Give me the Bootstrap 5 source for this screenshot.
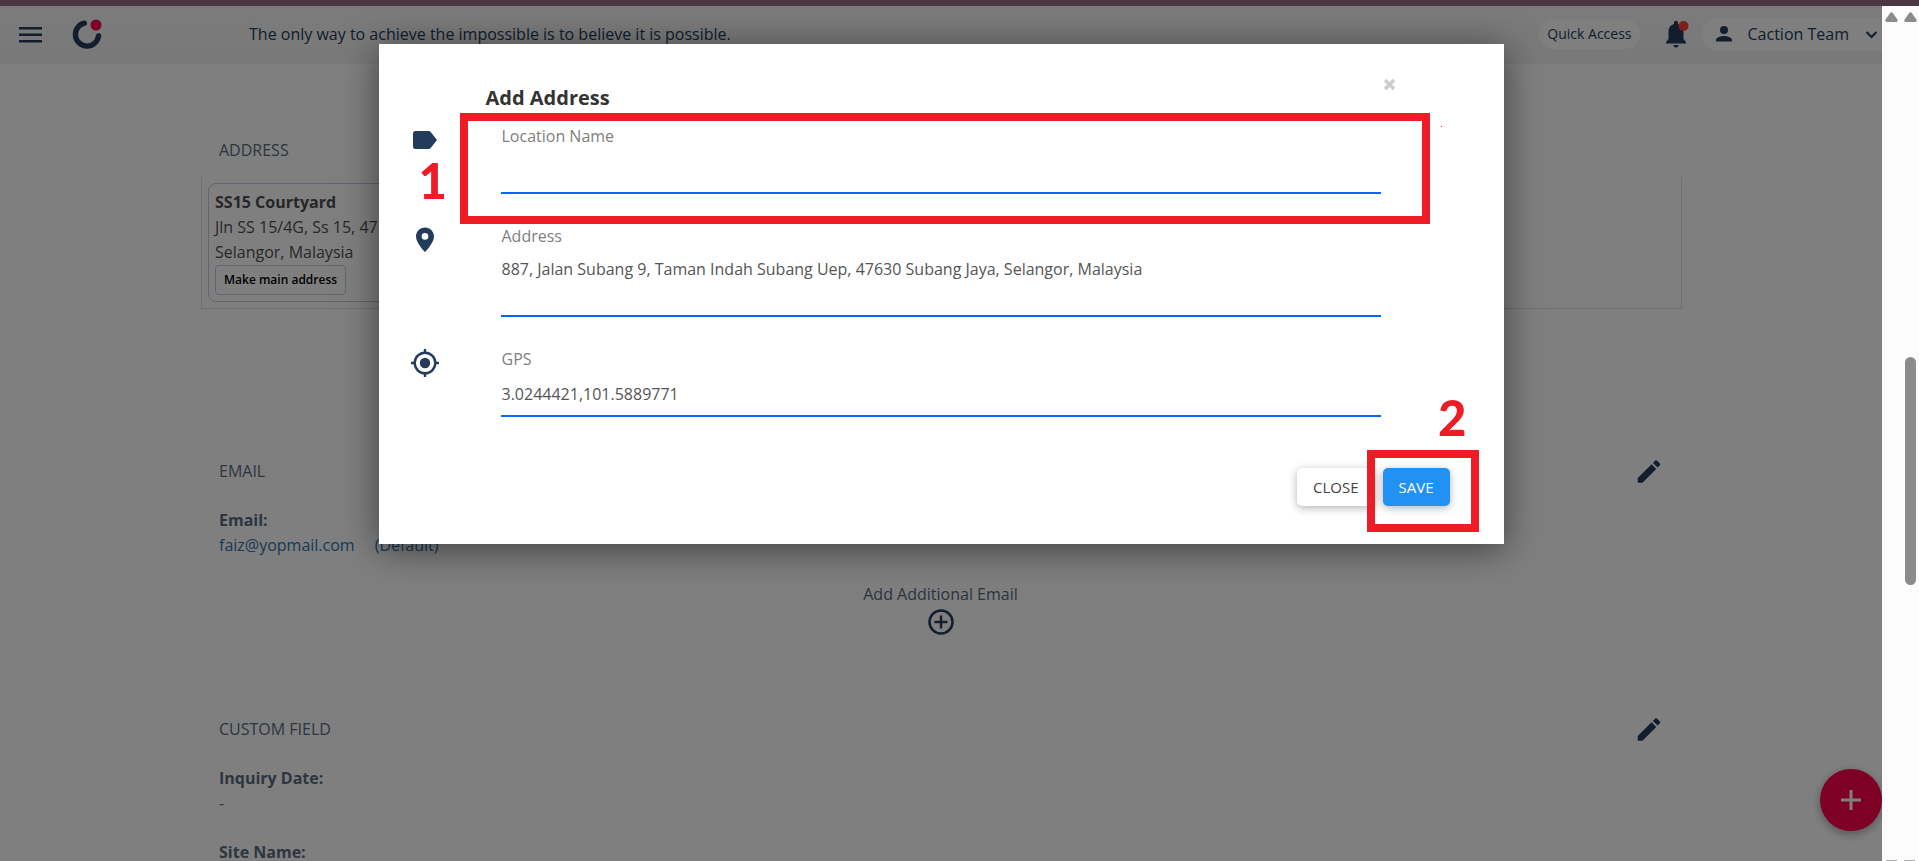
<!DOCTYPE html>
<html lang="en">
<head>
<meta charset="utf-8">
<title>Caction - Add Address</title>
<meta name="viewport" content="width=device-width, initial-scale=1">
<link href="https://cdn.jsdelivr.net/npm/bootstrap@5.3.0/dist/css/bootstrap.min.css" rel="stylesheet">
<style>
  :root { --navy: #243c5c; --slate: #5a6c80; --marker: #ee1c25; }
  body { font-family: "Open Sans", "Noto Sans", sans-serif; font-size: 16px; line-height: 25px; color: var(--slate); background: #fcfcfc; }
  .top-strip { height: 6px; background: #4d3542; }
  .icon-btn { border: 0; padding: 0; background: none; color: var(--navy); display: inline-flex; }
  svg { display: block; fill: currentColor; }

  .app-header { height: 58px; background: linear-gradient(#f7f7f7, #f2f2f2); color: var(--navy); padding: 0 0 2px 16px; }
  .app-logo { margin-left: 27px; }
  .motto { margin-left: 147px; }
  .pill { background: #fefefe; border: 0; color: var(--navy); }
  .quick-pill { height: 30px; border-radius: 15px; font-size: 14px; padding: 0 8px; line-height: 24px; }
  .account-pill { height: 34px; border-radius: 17px 0 0 17px; padding: 0 4px 0 10px; margin-left: 12px; }

  .page-body { padding: 74px 200px 0 201px; }
  .section-title { font-size: 16px; line-height: 25px; font-weight: 400; text-transform: uppercase; margin: 0; }
  .section-inner { padding-left: 18px; padding-right: 20px; }
  .address-list { border: 1px solid #dedede; border-top: 0; padding: 6px; margin-top: 14px; }
  .address-item { border: 1px solid #c3cbdd; border-radius: 8px; padding: 6px; width: 360px; color: #4f4f4f; white-space: nowrap; overflow: hidden; }
  .main-address-btn { display: block; height: 30px; padding: 0 8px; border: 1px solid #c3cbdd; border-radius: 4px; background: #fff; color: #000; font-size: 12px; font-weight: 600; line-height: 26px; }
  .email-section { margin-top: 150px; }
  .custom-section { margin-top: 75px; }
  .mail-link { color: #2f74ac; text-decoration: none; }
  .default-tag { margin-left: 20px; }
  .bold-label { font-weight: 700; }

  .fab { position: absolute; right: 0; bottom: 30px; width: 62px; height: 62px; border: 0; border-radius: 50%; background: #ff004b; color: #fff; box-shadow: 0 3px 10px rgba(0,0,0,.35); }
  .dim { position: absolute; inset: 0; background: rgba(0,0,0,.5); padding-top: 38px; }
  .address-dialog { position: relative; width: 60%; max-width: 1125px; margin: 0 auto; background: #fff; padding: 41px 54px 38px 46px; box-shadow: 0 5px 34px rgba(0,0,0,.5); }
  .dialog-title { font-size: 20px; line-height: 25px; font-weight: 700; color: #333; margin: 0 0 14px 61px; }
  .dismiss { position: absolute; right: 104px; top: 30px; border: 0; padding: 4px; background: none; color: #ccc; }
  .field-row { display: grid; grid-template-columns: 76px 1fr; margin-bottom: 30px; padding-right: 69px; }
  .field-icon { color: var(--navy); margin-left: -14px; margin-top: 1px; }
  .field-row label { display: block; color: #808080; padding-left: 1px; }
  .line-input { display: block; width: 100%; height: 45px; border: 0; border-bottom: 2px solid #0a66ff; padding: 0 1px; background: none; color: #555; resize: none; outline: 0; overflow: hidden; line-height: 25px; }
  textarea.line-input { height: 68px; padding-top: 8px; }
  .dialog-actions { margin-top: 51px; }
  .dialog-btn { height: 38px; border: 0; border-radius: 5px; font-size: 15px; padding: 0 16px; box-shadow: 0 2px 8px rgba(0,0,0,.3); }
  .close-btn { background: #fff; color: #444; }
  .save-btn { background: #2191f3; color: #fff; }

  .marker-box { position: absolute; border: 8px solid var(--marker); pointer-events: none; }
  .marker-name { left: 81px; right: 74px; top: 69px; height: 111px; }
  .marker-save { right: 25px; bottom: 12px; width: 112px; height: 82px; }
  .marker-num { position: absolute; font: 900 49px/50px Lato, sans-serif; color: var(--marker); }
  .num-one { left: 40px; top: 111px; }
  .num-two { right: 37px; top: 348px; }
  .marker-dot { position: absolute; width: 1px; height: 1px; background: var(--marker); right: 62px; top: 82px; }

  .scroll-gutter { width: 37px; background: #fcfcfc; position: relative; color: #8b8b8b; padding: 6px 2px 0 3px; }
  .scroll-thumb { position: absolute; right: 3px; top: 41%; width: 11px; height: 228px; border-radius: 6px; background: #8b8b8b; }
  .scroll-end { position: absolute; bottom: 0; left: 4px; right: 4px; }
  .scroll-end span { width: 11px; height: 1px; background: #aaa; }
</style>
</head>
<body class="vh-100 overflow-hidden d-flex flex-column">
<div class="top-strip flex-shrink-0"></div>
<div class="d-flex flex-grow-1 overflow-hidden">
  <div class="flex-grow-1 position-relative overflow-hidden bg-white">
    <header class="app-header d-flex align-items-center">
      <button class="icon-btn" aria-label="Menu"><svg width="29" height="24" viewBox="0 0 29 24"><path d="M3 5h23v2.500H3zM3 11.500h23V14H3zM3 18h23v2.500H3z"/></svg></button>
      <a href="#" class="app-logo" aria-label="Caction home"><svg width="30" height="30" viewBox="0 0 30 30"><path d="M12.300 4.200A11.600 11.600 0 1 0 26.500 17" fill="none" stroke="#243c5c" stroke-width="5.400" stroke-linecap="round"/><circle cx="24" cy="6" r="5.500" fill="#ff004b"/></svg></a>
      <span class="motto flex-grow-1 text-nowrap">The only way to achieve the impossible is to believe it is possible.</span>
      <button class="pill quick-pill text-nowrap">Quick Access</button>
      <button class="icon-btn position-relative ms-4" aria-label="Notifications"><svg width="26" height="28" viewBox="0 0 26 28"><path d="M2 23.500v-1.500l2.500-3V12c0-4.300 2.200-7 5.500-7.900V2.800a2 2 0 0 1 4 0v1.300c3.300.9 5.500 3.600 5.500 7.900v7l2.500 3v1.500zM9.500 25h5a2.500 2.500 0 0 1-5 0z"/><circle cx="19.500" cy="6" r="5" fill="#f44336"/></svg></button>
      <button class="pill account-pill d-flex align-items-center text-nowrap"><svg width="24" height="24" viewBox="0 0 24 24"><path d="M12 12a4 4 0 1 0 0-8 4 4 0 0 0 0 8zm0 2c-2.700 0-8 1.300-8 4v1.500h16V18c0-2.700-5.300-4-8-4z"/></svg><span class="ms-2 ps-1">Caction Team</span><svg class="ms-3" width="13" height="14" viewBox="0 0 13 14"><path d="M1.500 5l5 5 5-5" fill="none" stroke="currentColor" stroke-width="2"/></svg></button>
    </header>

    <main class="page-body">
      <section>
        <h2 class="section-title section-inner">Address</h2>
        <div class="address-list">
          <div class="address-item">
            <div class="bold-label">SS15 Courtyard</div>
            <div>Jln SS 15/4G, Ss 15, 47500 Subang Jaya,</div>
            <div>Selangor, Malaysia</div>
            <button class="main-address-btn">Make main address</button>
          </div>
        </div>
      </section>

      <section class="email-section section-inner">
        <div class="d-flex justify-content-between align-items-center">
          <h2 class="section-title">Email</h2>
          <button class="icon-btn" aria-label="Edit email"><svg width="26" height="25" viewBox="2 2 20 20"><path d="M3 17.250V21h3.750L17.810 9.940l-3.750-3.750zM20.710 7.040a1 1 0 0 0 0-1.410l-2.340-2.340a1 1 0 0 0-1.410 0l-1.830 1.830 3.750 3.750z"/></svg></button>
        </div>
        <div class="bold-label mt-4">Email:</div>
        <div><a class="mail-link" href="#">faiz@yopmail.com</a><a class="mail-link default-tag" href="#">(Default)</a></div>
        <div class="text-center mt-4">
          <div>Add Additional Email</div>
          <button class="icon-btn" aria-label="Add additional email"><svg width="26" height="28" viewBox="0 0 26 28" stroke="currentColor" stroke-width="2.500"><g fill="none"><circle cx="13" cy="15" r="11.500"/><path d="M13 8.500v13M6.500 15h13"/></g></svg></button>
        </div>
      </section>

      <section class="custom-section section-inner">
        <div class="d-flex justify-content-between align-items-center">
          <h2 class="section-title">Custom Field</h2>
          <button class="icon-btn" aria-label="Edit custom field"><svg width="26" height="25" viewBox="2 2 20 20"><path d="M3 17.250V21h3.750L17.810 9.940l-3.750-3.750zM20.710 7.040a1 1 0 0 0 0-1.410l-2.340-2.340a1 1 0 0 0-1.410 0l-1.830 1.830 3.750 3.750z"/></svg></button>
        </div>
        <div class="bold-label mt-4">Inquiry Date:</div>
        <div>-</div>
        <div class="bold-label mt-4">Site Name:</div>
      </section>
    </main>

    <button class="fab d-flex align-items-center justify-content-center" aria-label="Add"><svg width="22" height="22" viewBox="0 0 22 22"><path d="M9.500 1h3v8.500H21v3h-8.500V21h-3v-8.500H1v-3h8.500z"/></svg></button>

    <div class="dim">
      <div class="address-dialog" role="dialog" aria-labelledby="dialogTitle">
        <h1 class="dialog-title" id="dialogTitle">Add Address</h1>
        <button class="dismiss" aria-label="Dismiss"><svg width="13" height="13" viewBox="0 0 13 13"><path d="M2 2l9 9M11 2l-9 9" stroke="currentColor" stroke-width="3.400"/></svg></button>
        <div class="field-row">
          <svg class="field-icon" width="28" height="30" viewBox="0 0 28 30"><path d="M4.500 6h13.200c.8 0 1.500.4 2 1L26 15l-6.300 8c-.5.6-1.200 1-2 1H4.500A2.500 2.500 0 0 1 2 21.500v-13A2.500 2.500 0 0 1 4.500 6z"/></svg>
          <div><label for="locName">Location Name</label><input id="locName" class="line-input" type="text"></div>
        </div>
        <div class="field-row">
          <svg class="field-icon" width="28" height="30" viewBox="0 0 28 30"><path d="M14 2.500c-5 0-9 4-9 8.900 0 6.600 9 15.600 9 15.600s9-9 9-15.600c0-4.900-4-8.900-9-8.900zm0 12.200a3.300 3.300 0 1 1 0-6.600 3.300 3.300 0 0 1 0 6.600z"/></svg>
          <div><label for="locAddress">Address</label><textarea id="locAddress" class="line-input">887, Jalan Subang 9, Taman Indah Subang Uep, 47630 Subang Jaya, Selangor, Malaysia</textarea></div>
        </div>
        <div class="field-row">
          <svg class="field-icon" width="28" height="30" viewBox="0 0 28 30"><circle cx="14" cy="15" r="5.200"/><path d="M14 1v4M14 25v4M0 15h4M24 15h4" stroke="currentColor" stroke-width="2.400"/><circle cx="14" cy="15" r="10.300" fill="none" stroke="currentColor" stroke-width="2.400"/></svg>
          <div><label for="locGps">GPS</label><input id="locGps" class="line-input" type="text" value="3.0244421,101.5889771"></div>
        </div>
        <div class="dialog-actions d-flex justify-content-end">
          <button class="dialog-btn close-btn me-2">CLOSE</button>
          <button class="dialog-btn save-btn">SAVE</button>
        </div>
        <div class="marker-box marker-name"></div>
        <div class="marker-box marker-save"></div>
        <span class="marker-num num-one">1</span>
        <span class="marker-num num-two">2</span>
        <span class="marker-dot"></span>
      </div>
    </div>
  </div>
  <div class="scroll-gutter flex-shrink-0">
    <div class="d-flex justify-content-between">
      <svg width="13" height="10" viewBox="0 0 13 10"><path d="M5 1.200q1.500-1.700 3 0l4.600 6.500Q13 10 11 10H2Q0 10 .4 7.700z"/></svg>
      <svg width="13" height="10" viewBox="0 0 13 10"><path d="M5 1.200q1.500-1.700 3 0l4.600 6.500Q13 10 11 10H2Q0 10 .4 7.700z"/></svg>
    </div>
    <div class="scroll-thumb"></div>
    <div class="scroll-end d-flex justify-content-between"><span></span><span></span></div>
  </div>
</div>
<script src="https://cdn.jsdelivr.net/npm/bootstrap@5.3.0/dist/js/bootstrap.bundle.min.js"></script>
</body>
</html>
